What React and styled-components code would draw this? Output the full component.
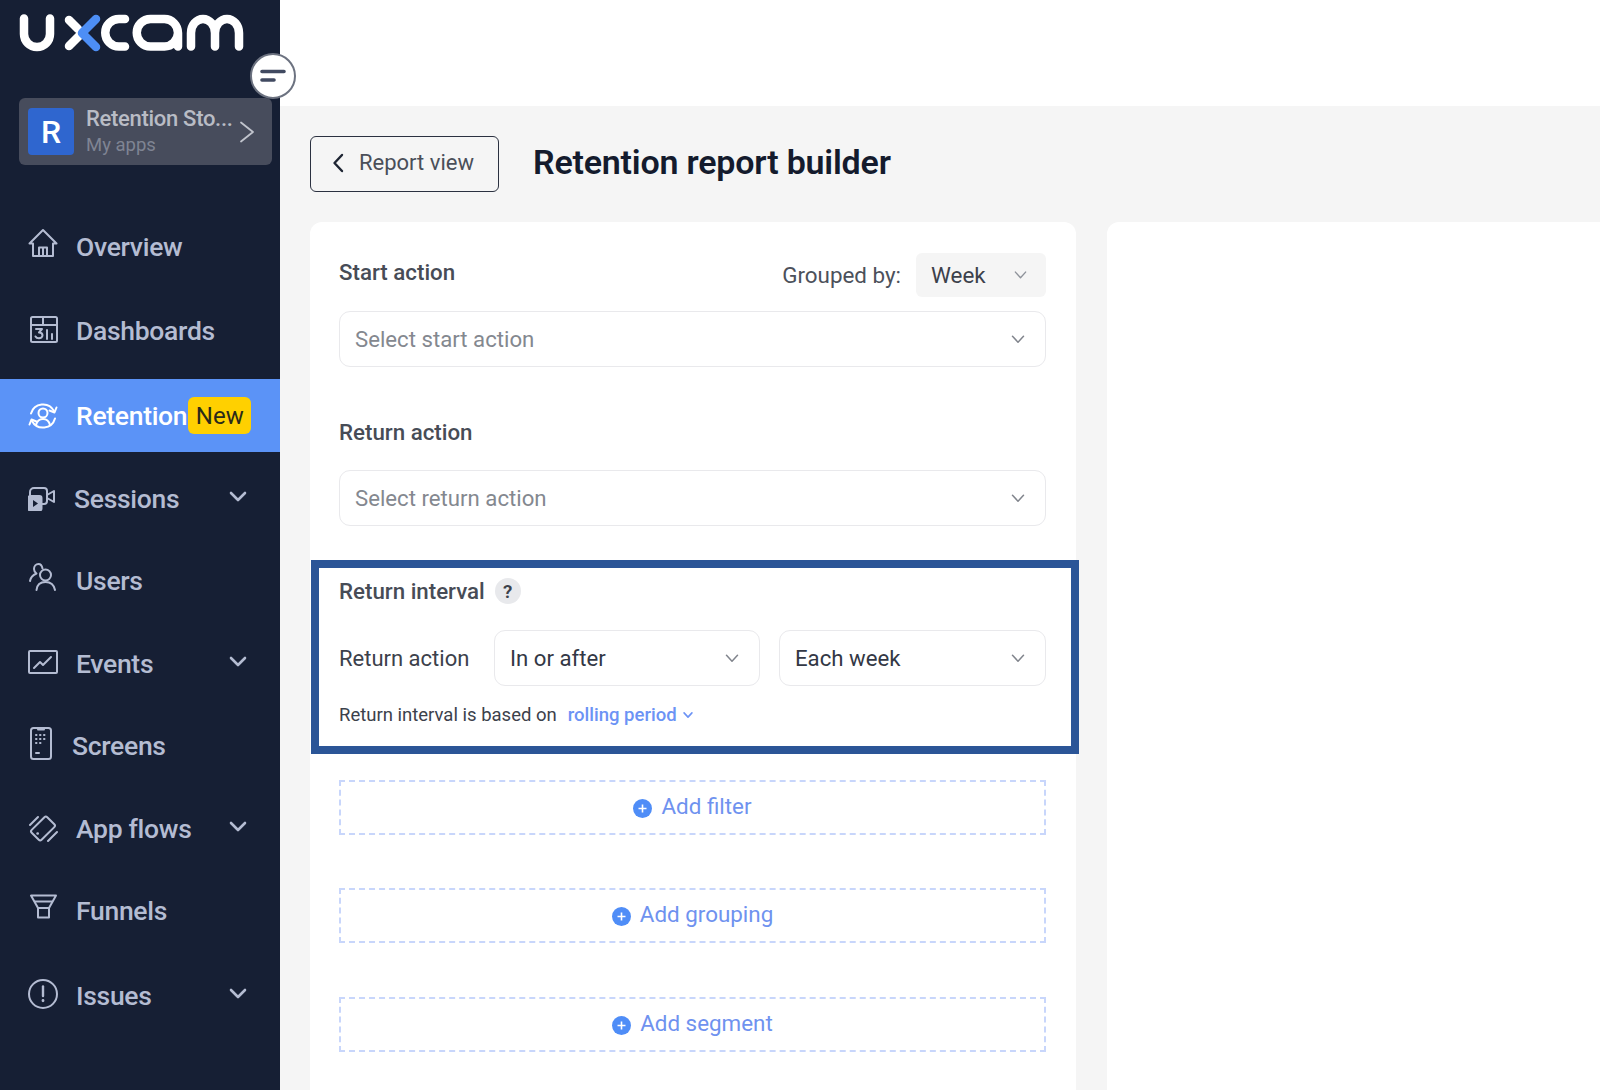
import React from "react";
import styled, { createGlobalStyle } from "styled-components";

const GlobalStyle = createGlobalStyle`
	* { box-sizing: border-box; }
	html, body {
		margin: 0;
		height: 1090px;
		overflow: hidden;
		background: #fff;
		font-family: "Roboto", "Liberation Sans", sans-serif;
	}
`;

const Logo = () => (
	<LogoSvg width="250" height="60" viewBox="0 0 250 60" fill="none" strokeWidth="8.500" strokeLinecap="round" strokeLinejoin="round">
		<g stroke="#fff">
			<path d="M14 18.500v15.500a13 13 0 0 0 26 0V18.500" />
			<path d="M59 46 72 33M59 20l9 9" />
			<path d="M115 19h-6a13.750 13.750 0 0 0 0 27.500h6" />
			<path d="M168 46.500V33a13.500 14 0 0 0-13.500-14h-14a13.750 13.750 0 0 0 0 27.500h14A13.500 14 0 0 0 168 33" />
			<path d="M181 46.500V33a12 14 0 0 1 24 0v13.500M205 33a12 14 0 0 1 24 0v13.500" />
		</g>
		<path d="M86 19 72 33l14 14" stroke="#4d8ef5" />
	</LogoSvg>
);

const iconProps = { fill: "none", stroke: "currentColor", strokeWidth: 2, strokeLinecap: "round", strokeLinejoin: "round" };

const HomeIcon = () => (
	<svg width="30" height="30" viewBox="0 0 30 30" {...iconProps}>
		<path d="M1.500 15.500 15 2l13.500 13.500H25v12.500H5V15.500z" />
		<path d="M11 28v-8.500h8V28M15 19.500V28" />
	</svg>
);

const DashboardIcon = () => (
	<svg width="30" height="27" viewBox="-2 0 30 27" {...iconProps}>
		<rect x="1" y="1" width="26" height="25" rx="1.500" />
		<path d="M1 9h26M13 1v8" />
		<path d="M6 13h6l-3 3.500c2.500 0 3.500 1.200 3.500 2.800s-1.500 3-3.500 3-3-.8-3.500-1.800" />
		<path d="M17 14v9M22 18v5" />
	</svg>
);

const RetentionIcon = () => (
	<svg width="30" height="26" viewBox="0 0 30 26" {...iconProps}>
		<path d="M3 10.500A12.500 12.500 0 0 1 26 8" />
		<path d="M28.500 4.500 26.500 9.500l-5-2" />
		<path d="M27 15.500A12.500 12.500 0 0 1 4 18" />
		<path d="M1.500 21.500 3.500 16.500l5 2" />
		<circle cx="15" cy="10" r="4.500" />
		<path d="M8 22c1-4 4-6 7-6s6 2 7 6" />
	</svg>
);

const SessionsIcon = () => (
	<svg width="28" height="24" viewBox="0 0 28 24" {...iconProps}>
		<path d="M2 9V5a4 4 0 0 1 4-4h10a3 3 0 0 1 3 3v10a3 3 0 0 1-3 3h-2" />
		<path d="m19 8 7-4v11l-7-4" />
		<rect x="0.500" y="9" width="13" height="14.500" rx="2" fill="currentColor" />
		<path d="M5 13v7l5-3.500z" fill="#161f34" stroke="none" />
	</svg>
);

const UsersIcon = () => (
	<svg width="30" height="28" viewBox="-2 0 30 28" {...iconProps}>
		<circle cx="15.500" cy="12" r="5.500" />
		<path d="M6.500 27c.5-5 4-8 9-8s8.500 3 9.500 8" />
		<path d="M12.500 5.500C12 3 10.500 1 8.500 1 6 1 4 3 4 6c0 2 1 3.500 2.500 4.500C3 12 .5 14.500 0 18" />
	</svg>
);

const EventsIcon = () => (
	<svg width="30" height="24" viewBox="0 0 30 24" {...iconProps}>
		<rect x="1" y="1" width="28" height="22" rx="1" />
		<path d="m6 18 6-6 3 3 8-8" />
	</svg>
);

const ScreensIcon = () => (
	<svg width="24" height="33" viewBox="-2 0 24 33" {...iconProps}>
		<rect x="1" y="1" width="20" height="31" rx="2.500" />
		<path d="M8 2.500h6" />
		<path d="M6 8h.5M10 8h.5M14 8h.5M6 12h.5M10 12h.5M14 12h.5M6 16h.5M10 16h.5M6 26h3" />
	</svg>
);

const FlowsIcon = () => (
	<svg width="30" height="31" viewBox="0 0 30 31" {...iconProps}>
		<rect x="8" y="4.500" width="14" height="22" rx="2" transform="rotate(45 15 15.500)" />
		<path d="M2 12 10 4M20 28l9-9" />
		<path d="M9.500 20.500h.3" strokeWidth="2.400" />
	</svg>
);

const FunnelIcon = () => (
	<svg width="29" height="25" viewBox="-2 0 29 25" {...iconProps}>
		<path d="M1 1.500h25L19 14v9.500H8V14z" />
		<path d="M5 7.500h17M8 14h11" />
	</svg>
);

const IssueIcon = () => (
	<svg width="30" height="30" viewBox="0 0 30 30" {...iconProps}>
		<circle cx="15" cy="15" r="14" />
		<path d="M15 7.500v9.500" strokeWidth="2.400" />
		<path d="M15 21.500v.3" strokeWidth="2.800" />
	</svg>
);

const Chevron = ({ size = 14, weight = 1.5 }) => (
	<svg width={size} height={size * 0.6} viewBox="0 0 14 8" fill="none" stroke="currentColor" strokeWidth={weight} strokeLinecap="round" strokeLinejoin="round">
		<path d="m1.500 1 5.500 6 5.500-6" />
	</svg>
);

const navItems = [
	{ label: "Overview", Icon: HomeIcon, lift: 7, top: 0 },
	{ label: "Dashboards", Icon: DashboardIcon, lift: 3, top: 1 },
	{ label: "Retention", Icon: RetentionIcon, lift: 0, top: 2, active: true, badge: "New" },
	{ label: "Sessions", Icon: SessionsIcon, lift: 0, top: 0, gap: 16, chevron: true },
	{ label: "Users", Icon: UsersIcon, lift: 7, top: -1 },
	{ label: "Events", Icon: EventsIcon, lift: 4, top: 0, chevron: true },
	{ label: "Screens", Icon: ScreensIcon, lift: 4, top: -1, gap: 14 },
	{ label: "App flows", Icon: FlowsIcon, lift: 0, top: 0, chevron: true },
	{ label: "Funnels", Icon: FunnelIcon, lift: 8, top: -1 },
	{ label: "Issues", Icon: IssueIcon, lift: 4, top: 2, chevron: true },
];

const PlusDot = () => (
	<PlusSvg width="19" height="19" viewBox="0 0 19 19">
		<circle cx="9.500" cy="9.500" r="9.500" fill="#4f8df7" />
		<path d="M9.500 5.500v8M5.500 9.500h8" stroke="#fff" strokeWidth="1.600" />
	</PlusSvg>
);

const Select = ({ value, placeholder, $width }) => (
	<SelectBox $width={$width} $placeholder={placeholder}>
		{value}
		<Chevron />
	</SelectBox>
);

export default function App() {
	return (
		<>
			<GlobalStyle />
			<Page>
				<Sidebar>
					<LogoRow>
						<Logo />
					</LogoRow>
					<Collapse>
						<svg width="26" height="14" viewBox="0 0 26 14" fill="none" stroke="#414a61" strokeWidth="3.600" strokeLinecap="round">
							<path d="M2 2.500h22M2 11h12" />
						</svg>
					</Collapse>
					<AppCard>
						<AppAvatar>R</AppAvatar>
						<AppText>
							<AppName>Retention Sto...</AppName>
							<AppSub>My apps</AppSub>
						</AppText>
						<svg width="16" height="22" viewBox="0 0 16 22" fill="none" stroke="#c1c4cd" strokeWidth="1.800" strokeLinecap="round" strokeLinejoin="round">
							<path d="m2 1.500 12 9.500-12 9.500" />
						</svg>
					</AppCard>
					<Nav>
						{navItems.map(({ label, Icon, lift, top, gap, chevron, active, badge }) => (
							<NavItem key={label} $active={active} $top={top}>
								<IconSlot $lift={lift}>
									<Icon />
								</IconSlot>
								<NavLabel $gap={gap}>{label}</NavLabel>
								{badge && <NewBadge>{badge}</NewBadge>}
								{chevron && (
									<NavChevron>
										<svg width="18" height="12" viewBox="0 0 18 12" fill="none" stroke="currentColor" strokeWidth="2.600" strokeLinecap="round" strokeLinejoin="round">
											<path d="m2 2 7 7 7-7" />
										</svg>
									</NavChevron>
								)}
							</NavItem>
						))}
					</Nav>
				</Sidebar>
				<Main>
					<TopBar />
					<Content>
						<Header>
							<BackButton>
								<svg width="12" height="20" viewBox="0 0 12 20" fill="none" stroke="#1e2533" strokeWidth="2.400" strokeLinecap="round" strokeLinejoin="round">
									<path d="M10 2 2.500 10l7.500 8" />
								</svg>
								Report view
							</BackButton>
							<Title>Retention report builder</Title>
						</Header>
						<Columns>
							<Card>
								<HeadRow>
									<StartLabel>Start action</StartLabel>
									<GroupedBy>
										Grouped by:
										<WeekPill>
											Week
											<Chevron size={13} />
										</WeekPill>
									</GroupedBy>
								</HeadRow>
								<Select value="Select start action" placeholder />
								<ReturnLabel>Return action</ReturnLabel>
								<Select value="Select return action" placeholder />
								<IntervalBox>
									<IntervalHead>
										<FieldLabel>Return interval</FieldLabel>
										<HelpBadge>?</HelpBadge>
									</IntervalHead>
									<IntervalRow>
										<RowLabel>Return action</RowLabel>
										<Select value="In or after" $width="266px" />
										<Select value="Each week" $width="267px" />
									</IntervalRow>
									<Hint>
										Return interval is based on
										<HintLink>
											rolling period
											<Chevron size={10} weight={2.2} />
										</HintLink>
									</Hint>
								</IntervalBox>
								<AddButton $top={26}>
									<PlusDot />
									Add filter
								</AddButton>
								<AddButton $top={53}>
									<PlusDot />
									Add grouping
								</AddButton>
								<AddButton $top={54}>
									<PlusDot />
									Add segment
								</AddButton>
							</Card>
							<BlankCard />
						</Columns>
					</Content>
				</Main>
			</Page>
		</>
	);
}

const Page = styled.div`
	display: grid;
	grid-template-columns: 280px 1fr;
	width: 1600px;
	height: 1090px;
	overflow: hidden;
`;

const Sidebar = styled.aside`
	position: relative;
	background: #161f34;
	height: 100%;
	display: flex;
	flex-direction: column;
`;

const LogoRow = styled.div`
	height: 98px;
	padding-left: 10px;
`;

const LogoSvg = styled.svg`
	display: block;
`;

const Collapse = styled.button`
	position: absolute;
	top: 53px;
	left: 250px;
	width: 46px;
	height: 46px;
	padding: 0;
	border-radius: 50%;
	border: 2px solid #6c7280;
	background: #fff;
	display: flex;
	align-items: center;
	justify-content: center;
	z-index: 2;
`;

const AppCard = styled.div`
	margin-left: 19px;
	width: 253px;
	height: 67px;
	background: #474c5c;
	border-radius: 6px;
	display: flex;
	align-items: center;
	padding: 0 17px 0 9px;
`;

const AppAvatar = styled.div`
	width: 46px;
	height: 47px;
	border-radius: 4px;
	background: #2f66cf;
	color: #fff;
	font-size: 32px;
	font-weight: 500;
	display: flex;
	align-items: center;
	justify-content: center;
`;

const AppText = styled.div`
	flex: 1;
	margin-left: 12px;
	display: flex;
	flex-direction: column;
`;

const AppName = styled.span`
	color: #b9bcc5;
	font-size: 22px;
	font-weight: 500;
	line-height: 28px;
	letter-spacing: -0.3px;
`;

const AppSub = styled.span`
	color: #7f8493;
	font-size: 18.500px;
	line-height: 25px;
`;

const Nav = styled.nav`
	margin-top: 45px;
	display: flex;
	flex-direction: column;
	gap: 10px;
`;

const NavItem = styled.a`
	height: 73px;
	margin-top: ${(p) => p.$top}px;
	display: flex;
	align-items: center;
	padding-left: 28px;
	background: ${(p) => (p.$active ? "#5b93f7" : "transparent")};
	color: ${(p) => (p.$active ? "#fff" : "#b4bcd2")};
`;

const IconSlot = styled.span`
	width: 30px;
	display: flex;
	justify-content: flex-start;
	margin-bottom: ${(p) => p.$lift}px;
`;

const NavLabel = styled.span`
	margin-left: ${(p) => p.$gap ?? 18}px;
	font-size: 26.500px;
	font-weight: 500;
	letter-spacing: -0.3px;
`;

const NewBadge = styled.span`
	margin-left: 1px;
	width: 63px;
	height: 37px;
	background: #ffd000;
	color: #2a2a1a;
	border-radius: 6px;
	font-size: 24px;
	display: flex;
	align-items: center;
	justify-content: center;
`;

const NavChevron = styled.span`
	margin-left: auto;
	margin-right: 33px;
	margin-bottom: 3px;
	display: flex;
	color: #b4bcd2;
`;

const Main = styled.main`
	display: flex;
	flex-direction: column;
	min-width: 0;
`;

const TopBar = styled.div`
	height: 106px;
	background: #fff;
`;

const Content = styled.div`
	flex: 1;
	background: #f5f5f5;
	padding: 30px 0 0 30px;
	display: flex;
	flex-direction: column;
`;

const Header = styled.header`
	display: flex;
	align-items: center;
	height: 56px;
`;

const BackButton = styled.button`
	width: 189px;
	height: 56px;
	background: transparent;
	border: 1.500px solid #2b3140;
	border-radius: 6px;
	color: #4a4f59;
	font-family: inherit;
	font-size: 22px;
	display: flex;
	align-items: center;
	gap: 15px;
	padding: 0 0 3px 21px;
`;

const Title = styled.h1`
	margin: 0 0 4px 34px;
	color: #141b2d;
	font-size: 34px;
	font-weight: 600;
	letter-spacing: -0.2px;
`;

const Columns = styled.div`
	margin-top: 30px;
	flex: 1;
	display: grid;
	grid-template-columns: 766px 1fr;
	column-gap: 31px;
`;

const Card = styled.section`
	background: #fff;
	border-radius: 12px 12px 0 0;
	padding: 31px 30px 0 29px;
`;

const BlankCard = styled.div`
	background: #fff;
	border-radius: 12px 0 0 0;
`;

const HeadRow = styled.div`
	display: flex;
	justify-content: space-between;
	align-items: center;
	height: 44px;
	margin-bottom: 14px;
`;

const FieldLabel = styled.div`
	color: #474c56;
	font-size: 22.300px;
	font-weight: 500;
	line-height: 30px;
`;

const StartLabel = styled(FieldLabel)`
	margin-bottom: 6px;
`;

const ReturnLabel = styled(FieldLabel)`
	margin: 50px 0 23px;
`;

const GroupedBy = styled.div`
	display: flex;
	align-items: center;
	gap: 15px;
	color: #4c515b;
	font-size: 22.400px;
`;

const WeekPill = styled.div`
	width: 130px;
	height: 44px;
	background: #f5f5f5;
	border-radius: 6px;
	color: #3c414b;
	display: flex;
	align-items: center;
	justify-content: space-between;
	padding: 0 19px 0 15px;

	svg {
		color: #8e929a;
	}
`;

const SelectBox = styled.div`
	width: ${(p) => p.$width || "100%"};
	height: 56px;
	border: 1.500px solid #e9e9ec;
	border-radius: 11px;
	background: #fff;
	color: ${(p) => (p.$placeholder ? "#84888f" : "#333845")};
	font-size: 22.200px;
	display: flex;
	align-items: center;
	justify-content: space-between;
	padding: 0 20px 0 15px;

	svg {
		color: #80848c;
		flex-shrink: 0;
	}
`;

const IntervalBox = styled.div`
	margin: 34px 0 0 -28px;
	width: 768px;
	height: 194px;
	border: 8px solid #2b5597;
	padding: 10px 0 0 20px;
`;

const IntervalHead = styled.div`
	display: flex;
	align-items: center;
	gap: 10px;
	height: 26px;
`;

const HelpBadge = styled.span`
	width: 26px;
	height: 26px;
	border-radius: 50%;
	background: #e8e9ec;
	color: #3c414b;
	font-size: 19px;
	font-weight: 600;
	display: flex;
	align-items: center;
	justify-content: center;
`;

const IntervalRow = styled.div`
	margin-top: 26px;
	width: 707px;
	display: flex;
	align-items: center;
	gap: 19px;
`;

const RowLabel = styled.span`
	flex: 1;
	color: #3c414b;
	font-size: 22px;
	white-space: nowrap;
`;

const Hint = styled.div`
	margin-top: 17px;
	display: flex;
	align-items: center;
	gap: 11px;
	color: #3c414b;
	font-size: 18.500px;
	line-height: 24px;
`;

const HintLink = styled.span`
	display: flex;
	align-items: center;
	gap: 6px;
	color: #6c93f5;
	font-weight: 500;
`;

const AddButton = styled.button`
	width: 100%;
	height: 55px;
	margin-top: ${(p) => p.$top}px;
	background: #fff;
	border: 2px dashed #c8d6fb;
	color: #6f92ef;
	font-family: inherit;
	font-size: 22.400px;
	display: flex;
	align-items: center;
	justify-content: center;
	gap: 9px;
	padding: 0 0 4px;
`;

const PlusSvg = styled.svg`
	margin-top: 6px;
`;
